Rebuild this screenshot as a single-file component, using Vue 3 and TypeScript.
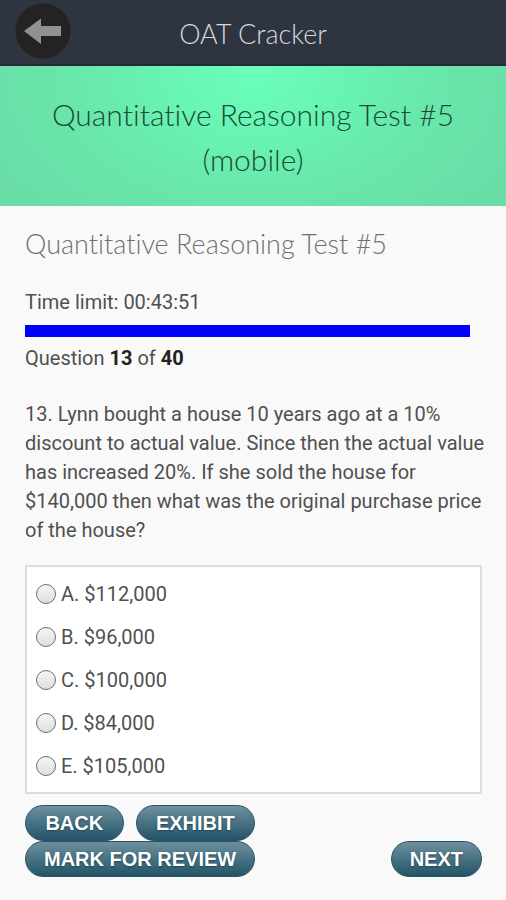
<script setup lang="ts">
import { computed, ref } from 'vue'

interface Choice {
  letter: string
  label: string
}

const testName = 'Quantitative Reasoning Test #5'
const current = 13
const total = 40
const limitSeconds = 2700
const secondsLeft = ref(2631)
const selected = ref('')

const timeLeft = computed(() => {
  const s = secondsLeft.value
  return [Math.floor(s / 3600), Math.floor(s / 60) % 60, s % 60]
    .map((part) => String(part).padStart(2, '0'))
    .join(':')
})
const barWidth = computed(() => `${(secondsLeft.value / limitSeconds) * 100}%`)

const choices: Choice[] = [
  { letter: 'A', label: '$112,000' },
  { letter: 'B', label: '$96,000' },
  { letter: 'C', label: '$100,000' },
  { letter: 'D', label: '$84,000' },
  { letter: 'E', label: '$105,000' },
]
</script>

<template>
  <div class="page">
    <header class="topbar">
      <button class="back" type="button" aria-label="Go back">
        <svg viewBox="0 0 56 56" aria-hidden="true">
          <circle cx="28" cy="28" r="27.5" fill="#252223" />
          <path d="M9 28 26 15.500V23H46V33H26V41Z" fill="#929090" />
        </svg>
      </button>
      <span class="app-name">OAT Cracker</span>
    </header>

    <div class="banner">
      <h1>{{ testName }} (mobile)</h1>
    </div>

    <main class="content">
      <h2>{{ testName }}</h2>
      <p class="time">Time limit: {{ timeLeft }}</p>
      <div class="track">
        <div class="bar" :style="{ width: barWidth }"></div>
      </div>
      <p class="counter">Question <b>{{ current }}</b> of <b>{{ total }}</b></p>

      <p id="question" class="question">
        {{ current }}. Lynn bought a house 10 years ago at a 10% discount to actual value. Since
        then the actual value has increased 20%. If she sold the house for $140,000 then what was
        the original purchase price of the house?
      </p>

      <div class="choices" role="radiogroup" aria-labelledby="question">
        <label v-for="choice in choices" :key="choice.letter" class="choice">
          <input v-model="selected" type="radio" name="answer" :value="choice.letter" />
          <span>{{ choice.letter }}. {{ choice.label }}</span>
        </label>
      </div>

      <div class="actions">
        <div class="group">
          <button class="pill" type="button">BACK</button>
          <button class="pill" type="button">EXHIBIT</button>
          <button class="pill wide" type="button">MARK FOR REVIEW</button>
        </div>
        <button class="pill" type="button">NEXT</button>
      </div>
    </main>
  </div>
</template>

<style>
body {
  margin: 0;
  background: #f9f9f9;
}
</style>

<style scoped>
.page {
  min-height: 100vh;
  background: #f9f9f9;
  color: #505050;
  font-family: Roboto, "Liberation Sans", sans-serif;
  font-size: 20px;
  line-height: 29px;
}

.topbar {
  display: grid;
  grid-template-columns: 72px 1fr 72px;
  align-items: center;
  box-sizing: border-box;
  height: 66px;
  padding-bottom: 2px;
  border-bottom: 2px solid #25273a;
  background: #2e3440;
}

.back {
  width: 56px;
  height: 56px;
  margin-left: 15px;
  padding: 0;
  border: 0;
  border-radius: 50%;
  background: none;
}

.back svg {
  display: block;
  width: 100%;
  height: 100%;
}

.app-name,
h1,
h2 {
  font-family: Lato, "Open Sans", sans-serif;
  font-variant-ligatures: none;
  font-weight: 300;
}

.app-name {
  padding-top: 6px;
  color: #d5d8dd;
  font-size: 27px;
  line-height: 40px;
  text-align: center;
}

.banner {
  padding: 26px 24px 24px;
  background: radial-gradient(ellipse 290px 190px at 50% 8%, #6affba 0%, #68f2b0 35%, #69e7aa 62%, #6adda7 100%);
}

h1,
h2 {
  margin: 0;
}

h1 {
  color: #1b4a36;
  font-size: 30px;
  line-height: 45px;
  text-align: center;
}

.content {
  padding: 20px 24px 24px 25px;
}

h2 {
  margin-bottom: 26px;
  color: #707070;
  font-size: 27px;
  line-height: 36px;
}

p {
  margin: 0;
}

.track {
  margin: 8px 0 7px;
}

.bar {
  height: 12px;
  background: #00f;
}

.counter b {
  color: #222;
  font-weight: 700;
}

.question {
  margin: 27px -4px 0 0;
}

.choices {
  display: flex;
  flex-direction: column;
  gap: 14px;
  margin-top: 20px;
  padding: 13px 9px 11px;
  border: 2px solid #ddd;
  background: #fff;
}

.choice {
  display: flex;
  align-items: center;
  gap: 5px;
}

.choice input {
  appearance: none;
  flex: none;
  width: 20px;
  height: 20px;
  margin: 0 0 2px;
  border: 1px solid #6e6e6e;
  border-radius: 50%;
  background: linear-gradient(#f6f6f6, #dedede);
}

.choice input:checked {
  background: radial-gradient(circle, #333 0 4px, #e6e6e6 5px);
}

.actions {
  display: flex;
  align-items: flex-end;
  justify-content: space-between;
  margin-top: 11px;
}

.group {
  display: grid;
  grid-template-columns: auto auto;
  column-gap: 12px;
}

.pill {
  height: 36px;
  padding: 0 18px;
  border: 1px solid #2d5265;
  border-radius: 18px;
  background: linear-gradient(#6d909e, #235468);
  color: #fff;
  font-family: "Liberation Sans", Arial, sans-serif;
  font-size: 20px;
  font-weight: 700;
  line-height: 34px;
  text-shadow: 0 1px 2px #1d4354;
}

.wide {
  grid-column: span 2;
}
</style>
